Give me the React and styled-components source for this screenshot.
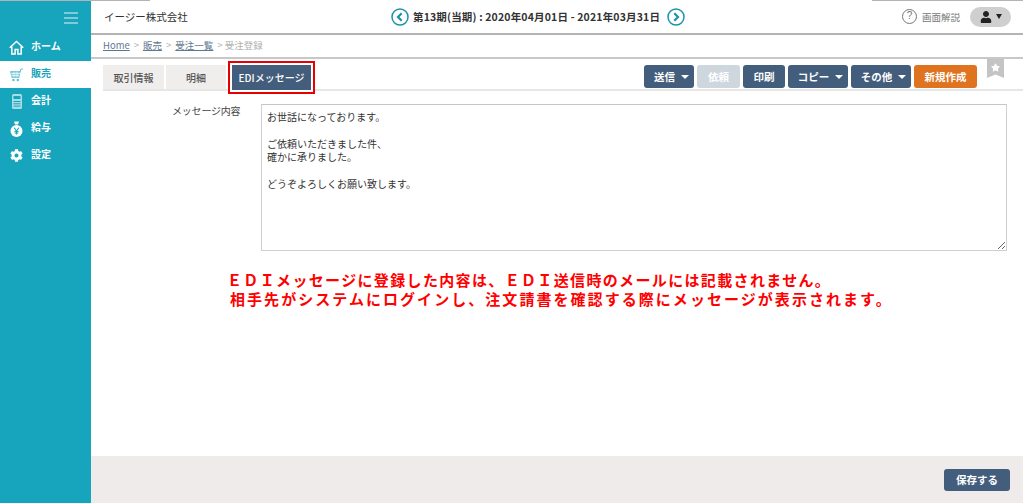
import React from "react";
import styled, { createGlobalStyle } from "styled-components";
import { FaCog, FaUser, FaStar } from "react-icons/fa";

const Global = createGlobalStyle`
  html, body { margin: 0; padding: 0; background: #fff; }
  body { font-family: "Noto Sans CJK JP", "Liberation Sans", sans-serif; }
  * { box-sizing: border-box; }
`;

const TEAL = "#17a5bd";
const NAVY = "#435d7c";
const JP = `"Noto Sans CJK JP", sans-serif`;

const S = {
  Page: styled.div`
    display: flex;
    width: 1023px;
    height: 503px;
    overflow: hidden;
    position: relative;
  `,
  TopEdge: styled.div`
    position: absolute;
    top: 0;
    left: ${(p) => p.$x}px;
    width: ${(p) => p.$w}px;
    height: 1px;
    background: #b4b4b4;
  `,
  Side: styled.nav`
    width: 91px;
    background: ${TEAL};
    flex-shrink: 0;
    display: flex;
    flex-direction: column;
  `,
  Burger: styled.div`
    height: 34px;
    padding: 12px 13px 0 64px;
    display: flex;
    flex-direction: column;
    gap: 3px;
    span {
      display: block;
      height: 2px;
      background: #7fcbd9;
    }
  `,
  NavItem: styled.div`
    height: 27px;
    display: flex;
    align-items: center;
    padding-left: 9px;
    gap: 7px;
    font-size: 10px;
    font-weight: 700;
    background: ${(p) => (p.$active ? "#fff" : "transparent")};
    color: ${(p) => (p.$active ? TEAL : "#fff")};
  `,
  NavIcon: styled.span`
    width: 15px;
    display: flex;
    justify-content: center;
    align-items: center;
    flex-shrink: 0;
  `,
  NavLabel: styled.span`
    margin-bottom: 5px;
  `,
  Main: styled.main`
    flex: 1;
    display: flex;
    flex-direction: column;
    min-width: 0;
  `,
  Header: styled.header`
    height: 35px;
    border-bottom: 2px solid #b4b4b4;
    display: grid;
    grid-template-columns: 287px auto 1fr;
    align-items: center;
    padding: 0 12px 0 13px;
  `,
  Company: styled.div`
    font-size: 10.5px;
    color: #333;
  `,
  Period: styled.div`
    display: flex;
    align-items: center;
    gap: 4px;
    font-size: 10.5px;
    font-weight: 700;
    letter-spacing: 0.16px;
    color: #333;
    svg:last-child {
      margin-left: 3px;
    }
  `,
  Right: styled.div`
    display: flex;
    justify-content: flex-end;
    align-items: center;
    gap: 5px;
  `,
  Help: styled.span`
    width: 15px;
    height: 15px;
    border: 1.5px solid #777;
    border-radius: 50%;
    font-size: 10px;
    line-height: 12px;
    text-align: center;
    color: #777;
    font-family: "Liberation Sans", sans-serif;
  `,
  HelpText: styled.span`
    font-size: 9.5px;
    color: #777;
    margin-right: 5px;
  `,
  UserPill: styled.div`
    width: 41px;
    height: 20px;
    border-radius: 10px;
    background: #cfcfcf;
    display: flex;
    align-items: center;
    justify-content: center;
    gap: 4px;
    color: #222;
  `,
  PillCaret: styled.i`
    width: 0;
    height: 0;
    border-left: 3px solid transparent;
    border-right: 3px solid transparent;
    border-top: 5px solid #222;
  `,
  Crumbs: styled.div`
    height: 24px;
    border-bottom: 2px solid #c8c8c8;
    padding: 0 12px 3px;
    display: flex;
    align-items: center;
    gap: 4px;
    font-size: 9.5px;
    color: #b0b0b0;
    a {
      color: #5f7890;
      text-decoration: underline;
    }
  `,
  Bar: styled.div`
    margin: 6px 0 0 12px;
    height: 26px;
    border-bottom: 2px solid #e6e6e6;
    display: flex;
    justify-content: space-between;
    position: relative;
  `,
  Tabs: styled.div`
    display: flex;
    gap: 2px;
  `,
  Tab: styled.div`
    width: ${(p) => p.$w}px;
    height: 24px;
    display: flex;
    align-items: center;
    justify-content: center;
    font-size: 10px;
    font-weight: 500;
    background: #f0eded;
    color: #555;
  `,
  ActiveTab: styled.div`
    width: 87px;
    height: 33px;
    margin: -4px 0 -5px 0;
    border: 2px solid #e60000;
    padding: 2px;
    background: #fff;
    position: relative;
    z-index: 1;
    div {
      height: 100%;
      background: ${NAVY};
      color: #fff;
      font-size: 10px;
      font-weight: 500;
      display: flex;
      align-items: center;
      justify-content: center;
    }
  `,
  Buttons: styled.div`
    display: flex;
    gap: 3px;
    padding-right: 46px;
  `,
  Btn: styled.div`
    width: ${(p) => p.$w}px;
    height: 23px;
    border-radius: 3px;
    display: flex;
    align-items: center;
    justify-content: center;
    gap: 6px;
    font-size: 10.5px;
    font-weight: 700;
    color: #fff;
    background: ${(p) => p.$bg || NAVY};
  `,
  Caret: styled.i`
    width: 0;
    height: 0;
    margin-right: -5px;
    border-left: 4px solid transparent;
    border-right: 4px solid transparent;
    border-top: 4px solid #fff;
  `,
  Ribbon: styled.div`
    position: absolute;
    right: 19px;
    top: -6px;
    width: 17px;
    height: 19px;
    background: #c4c4c4;
    clip-path: polygon(0 0, 100% 0, 100% 100%, 50% 82%, 0 100%);
    color: #fff;
    display: flex;
    justify-content: center;
    padding-top: 4px;
  `,
  Form: styled.div`
    display: flex;
    margin-top: 13px;
    padding-left: 81px;
  `,
  Label: styled.div`
    width: 89px;
    font-size: 10px;
    letter-spacing: -0.2px;
    color: #444;
    line-height: 13px;
  `,
  Area: styled.textarea`
    width: 746px;
    height: 147px;
    border: 1px solid #d0d0d0;
    border-top: 1px solid #c6c6c6;
    outline: none;
    padding: 5px 5px 3px;
    font-family: ${JP};
    font-size: 10px;
    line-height: 13.4px;
    color: #333;
    background: #fff;
  `,
  Note: styled.div`
    margin: 19px 0 0 139px;
    font-family: ${JP};
    font-size: 15px;
    font-weight: 700;
    line-height: 19px;
    color: #ff0000;
    white-space: nowrap;
  `,
  NoteLine: styled.div`
    letter-spacing: ${(p) => p.$ls}px;
    text-indent: ${(p) => p.$indent || 0}px;
  `,
  Spacer: styled.div`
    flex: 1;
  `,
  Footer: styled.footer`
    height: 47px;
    background: #efebeb;
    display: flex;
    align-items: center;
    justify-content: flex-end;
    padding: 0 13px 0 0;
  `,
  Save: styled.div`
    width: 66px;
    height: 22px;
    border-radius: 3px;
    background: ${NAVY};
    color: #fff;
    font-size: 10.5px;
    font-weight: 700;
    display: flex;
    align-items: center;
    justify-content: center;
  `,
};

const HomeIcon = () => (
  <svg width="15" height="15" viewBox="0 0 16 16" fill="none" stroke="#fff" strokeWidth="1.6">
    <path d="M0.8 8.2 8 1.5 15.2 8.2" />
    <path d="M3 7v7.8h3.5V10h3v4.8H13V7" />
  </svg>
);

const CartIcon = () => (
  <svg width="13" height="14" viewBox="0 0 13 14" fill="none" stroke="#5cbfd0">
    <path d="M0.5 3.5h9.5L9 9.5H2z" fill="#8fd4e0" strokeWidth="0.8" />
    <path d="M1 5.5h9M1.4 7.5h8.2M4 3.5v6M7 3.5v6" stroke="#fff" strokeWidth="0.6" />
    <path d="M10 4 11 1h1.8" strokeWidth="1" />
    <circle cx="3.4" cy="12" r="1.2" fill="#5cbfd0" stroke="none" />
    <circle cx="7.8" cy="12" r="1.2" fill="#5cbfd0" stroke="none" />
  </svg>
);

const CalcIcon = () => (
  <svg width="10" height="15" viewBox="0 0 10 15">
    <rect x="0" y="0" width="10" height="15" rx="1.5" fill="#a9dde6" />
    <rect x="1.5" y="2" width="7" height="3" fill={TEAL} />
    <path d="M1.5 7.5h7M1.5 9.8h7M1.5 12.1h7" stroke={TEAL} strokeWidth="1" />
  </svg>
);

const BagIcon = () => (
  <svg width="13" height="16" viewBox="0 0 13 16">
    <path d="M4 0.5h5L8 3.5H5z" fill="#fff" />
    <circle cx="6.5" cy="10" r="6" fill="#fff" />
    <path d="M4.2 6.8 6.5 10l2.3-3.2M6.5 10v3.5M4.5 10.5h4M4.5 12h4" stroke={TEAL} strokeWidth="1.1" fill="none" />
  </svg>
);

const PeriodArrow = ({ right }) => (
  <svg width="18" height="18" viewBox="0 0 18 18" fill="none">
    <circle cx="9" cy="9" r="8" stroke="#1b93ad" strokeWidth="1.5" />
    <path d={right ? "M7.3 5.2 11 9l-3.7 3.8" : "M10.7 5.2 7 9l3.7 3.8"} stroke="#1b93ad" strokeWidth="2.2" />
  </svg>
);

const nav = [
  { label: "ホーム", icon: <HomeIcon /> },
  { label: "販売", icon: <CartIcon />, active: true },
  { label: "会計", icon: <CalcIcon /> },
  { label: "給与", icon: <BagIcon /> },
  { label: "設定", icon: <FaCog size={13} /> },
];

const message = `お世話になっております。

ご依頼いただきました件、
確かに承りました。

どうぞよろしくお願い致します。`;

const App = () => (
  <>
    <Global />
    <S.Page>
      <S.Side>
        <S.Burger>
          <span />
          <span />
          <span />
        </S.Burger>
        {nav.map((n) => (
          <S.NavItem key={n.label} $active={n.active}>
            <S.NavIcon>{n.icon}</S.NavIcon>
            <S.NavLabel>{n.label}</S.NavLabel>
          </S.NavItem>
        ))}
      </S.Side>
      <S.Main>
        <S.Header>
          <S.Company>イージー株式会社</S.Company>
          <S.Period>
            <PeriodArrow />
            第13期(当期) : 2020年04月01日 - 2021年03月31日
            <PeriodArrow right />
          </S.Period>
          <S.Right>
            <S.Help>?</S.Help>
            <S.HelpText>画面解説</S.HelpText>
            <S.UserPill>
              <FaUser size={12} />
              <S.PillCaret />
            </S.UserPill>
          </S.Right>
        </S.Header>
        <S.Crumbs>
          <a>Home</a> &gt; <a>販売</a> &gt; <a>受注一覧</a> &gt; 受注登録
        </S.Crumbs>
        <S.Bar>
          <S.Tabs>
            <S.Tab $w={61}>取引情報</S.Tab>
            <S.Tab $w={60}>明細</S.Tab>
            <S.ActiveTab>
              <div>EDIメッセージ</div>
            </S.ActiveTab>
          </S.Tabs>
          <S.Buttons>
            <S.Btn $w={50}>送信<S.Caret /></S.Btn>
            <S.Btn $w={43} $bg="#ced6de">依頼</S.Btn>
            <S.Btn $w={42}>印刷</S.Btn>
            <S.Btn $w={60}>コピー<S.Caret /></S.Btn>
            <S.Btn $w={60}>その他<S.Caret /></S.Btn>
            <S.Btn $w={63} $bg="#e0731f">新規作成</S.Btn>
          </S.Buttons>
          <S.Ribbon>
            <FaStar size={9} />
          </S.Ribbon>
        </S.Bar>
        <S.Form>
          <S.Label>メッセージ内容</S.Label>
          <S.Area readOnly value={message} />
        </S.Form>
        <S.Note>
          <S.NoteLine $ls={1.35} $indent={-3}>
            ＥＤＩメッセージに登録した内容は、ＥＤＩ送信時のメールには記載されません。
          </S.NoteLine>
          <S.NoteLine $ls={2.05}>
            相手先がシステムにログインし、注文請書を確認する際にメッセージが表示されます。
          </S.NoteLine>
        </S.Note>
        <S.Spacer />
        <S.Footer>
          <S.Save>保存する</S.Save>
        </S.Footer>
      </S.Main>
      <S.TopEdge $x={0} $w={150} />
      <S.TopEdge $x={872} $w={151} />
    </S.Page>
  </>
);

export default App;
